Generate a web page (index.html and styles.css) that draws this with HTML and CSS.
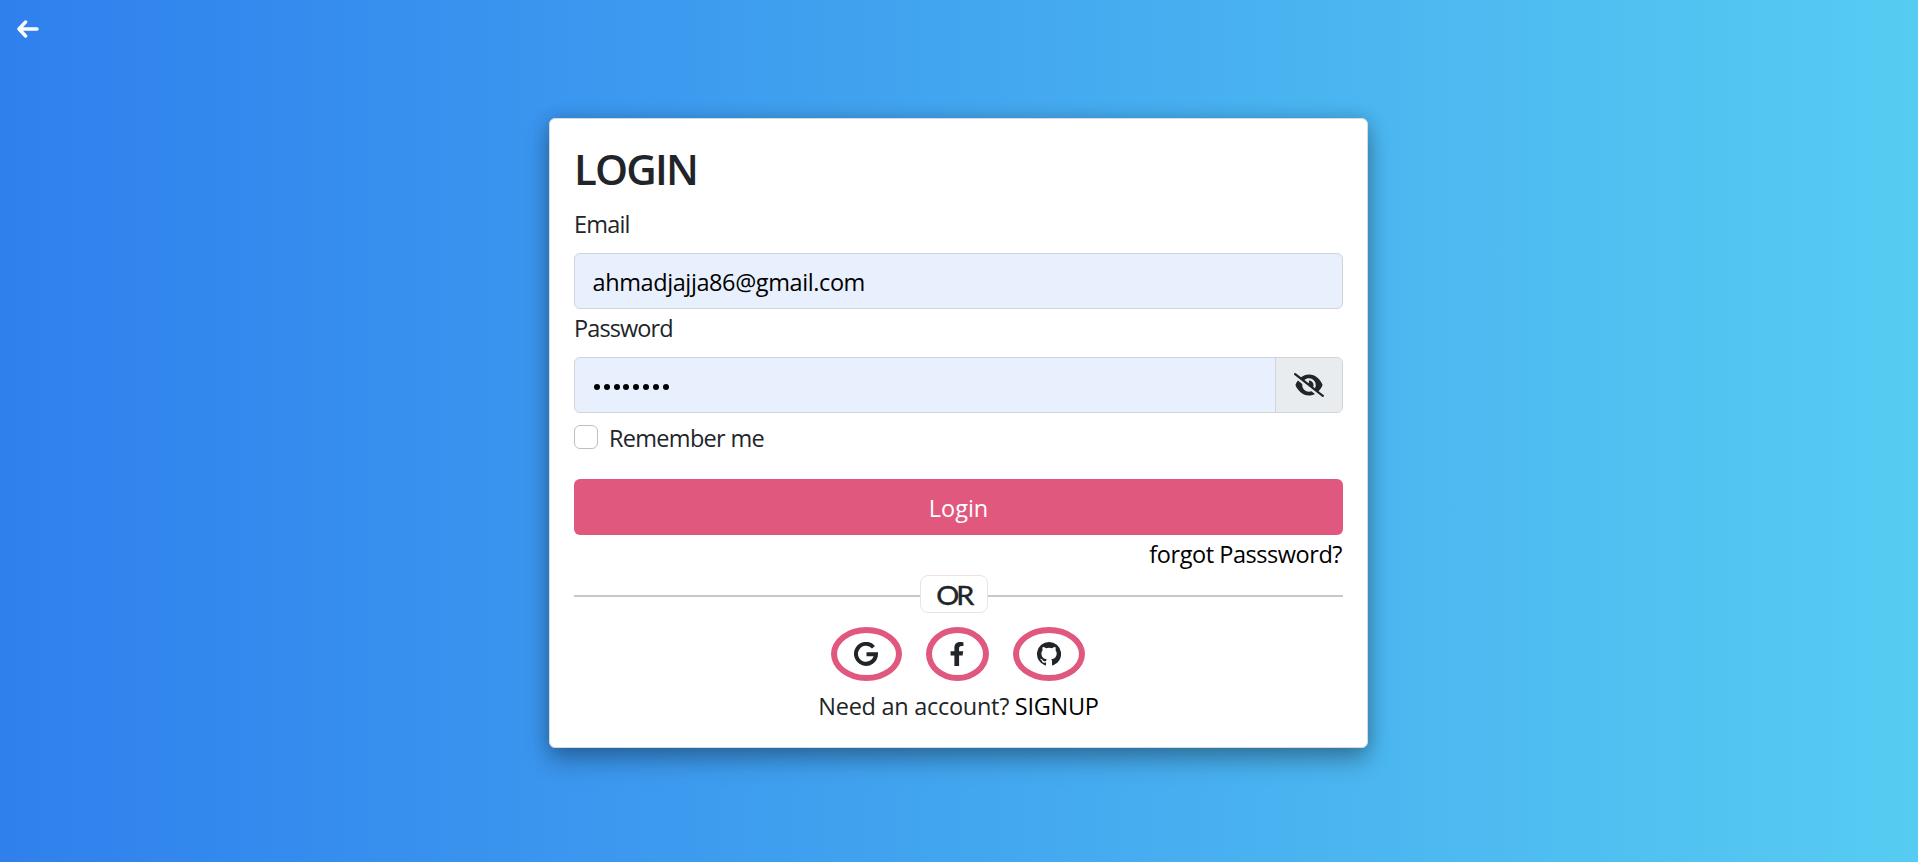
FILE: index.html
```html
<!DOCTYPE html>
<html lang="en">
<head>
<meta charset="utf-8">
<title>Login</title>
<link rel="stylesheet" href="styles.css">
</head>
<body>
<a class="back" href="#" aria-label="Back"><svg viewBox="0 0 22 20"><path d="M8.600 3 2 10l6.600 7M2.400 10H20" fill="none" stroke="#fff" stroke-width="3.400" stroke-linecap="round" stroke-linejoin="round"/></svg></a>
<main class="card">
  <h1 class="title"><span>LOGIN</span></h1>
  <div class="label"><span class="t-email">Email</span></div>
  <div class="field"><span class="value">ahmadjajja86@gmail.com</span></div>
  <div class="label"><span class="t-pass">Password</span></div>
  <div class="field group">
    <div class="dots"><i></i><i></i><i></i><i></i><i></i><i></i><i></i><i></i></div>
    <div class="addon"><svg viewBox="0 0 640 512"><path fill="#212529" d="M38.800 5.100C28.400-3.100 13.300-1.200 5.100 9.200S-1.200 34.700 9.200 42.900l592 464c10.400 8.200 25.500 6.300 33.700-4.100s6.300-25.500-4.100-33.700L525.600 386.700c39.600-40.600 66.400-86.100 79.900-118.400 3.300-7.900 3.300-16.700 0-24.600-14.900-35.700-46.200-87.700-93-131.100C465.500 68.800 400.800 32 320 32c-68.200 0-125 26.300-169.300 60.800L38.800 5.100zM223.100 149.500C248.600 126.200 282.700 112 320 112c79.500 0 144 64.500 144 144 0 24.900-6.300 48.300-17.400 68.700L408 294.500c8.400-19.300 10.600-41.400 4.800-63.300-11.100-41.500-47.800-69.400-88.600-71.100-5.800-.2-9.200 6.100-7.400 11.700 2.100 6.400 3.300 13.200 3.300 20.300 0 10.200-2.400 19.800-6.600 28.300l-90.400-70.900zM373 389.900c-16.400 6.500-34.300 10.100-53 10.100-79.500 0-144-64.500-144-144 0-6.900.5-13.600 1.400-20.200L83.100 161.500C60.300 191.200 44 220.800 34.500 243.700c-3.300 7.900-3.300 16.700 0 24.600 14.900 35.700 46.200 87.700 93 131.100C174.500 443.200 239.200 480 320 480c47.800 0 89.900-12.900 126.200-32.500L373 389.900z"/></svg></div>
  </div>
  <div class="remember"><span class="box"></span><span class="t-rem">Remember me</span></div>
  <button class="submit"><span>Login</span></button>
  <div class="forgot"><a href="#">forgot Passsword?</a></div>
  <div class="divider"><span class="line left"></span><span class="or"><span>OR</span></span><span class="line right"></span></div>
  <div class="social">
    <a class="ring google" href="#" aria-label="Google"><svg viewBox="0 0 24 24"><path fill="none" stroke="#212529" stroke-width="4" d="M19.500 5.200A10 10 0 1 0 22 12.200H12.500"/></svg></a>
    <a class="ring facebook" href="#" aria-label="Facebook"><svg viewBox="0 0 320 512"><path fill="#212529" d="m279 288 14.200-92.700h-88.900v-60.100c0-25.300 12.400-50.100 52.200-50.100H297V6.300S260.400 0 225.400 0C152.200 0 104.400 44.400 104.400 124.700v70.600H23V288h81.400v224h100.200V288z"/></svg></a>
    <a class="ring github" href="#" aria-label="GitHub"><svg viewBox="0 0 16 16"><path fill="#212529" d="M8 0a8 8 0 0 0-2.530 15.590c.4.070.55-.17.55-.38v-1.490c-2.010.37-2.530-.49-2.690-.94-.09-.23-.48-.94-.82-1.130-.28-.15-.68-.52-.01-.53.63-.01 1.080.58 1.230.82.720 1.210 1.870.87 2.330.66.070-.52.280-.87.510-1.070-1.780-.2-3.640-.89-3.640-3.950 0-.87.310-1.590.82-2.150-.08-.2-.36-1.020.08-2.120 0 0 .67-.21 2.200.82a7.420 7.420 0 0 1 4 0c1.530-1.040 2.200-.82 2.200-.82.440 1.100.16 1.920.08 2.120.51.560.82 1.270.82 2.150 0 3.070-1.870 3.750-3.650 3.950.29.250.54.730.54 1.480v2.200c0 .21.150.46.550.38A8 8 0 0 0 8 0z"/></svg></a>
  </div>
  <div class="signup"><span>Need an account? <a href="#">SIGNUP</a></span></div>
</main>
</body>
</html>
```
FILE: styles.css
```css
* { box-sizing: border-box; }
body {
  margin: 0;
  height: 862px;
  overflow: hidden;
  display: flex;
  justify-content: center;
  align-items: flex-start;
  padding-top: 118px;
  background: linear-gradient(to right, #2f80ed, #56ccf2);
  font: 23.5px/36px "Open Sans", "Noto Sans", sans-serif;
  color: #212529;
}
a { color: #000; text-decoration: none; }
.back { position: absolute; left: 16.5px; top: 19px; width: 22px; height: 20px; }
.back svg { display: block; width: 22px; height: 20px; }
.card {
  width: 819px;
  height: 630px;
  margin-right: 1px;
  padding: 24px;
  background: #fff;
  border: 1px solid #d5dade;
  border-radius: 6px;
  box-shadow: 0 12px 24px rgba(0, 0, 0, .3), 0 0 18px rgba(0, 0, 0, .15);
}
.title { margin: 0; height: 63px; font-size: 42px; line-height: 52px; font-weight: 600; letter-spacing: -1.8px; }
.label { height: 44px; }
.t-email { letter-spacing: -.8px; }
.t-pass { letter-spacing: -.9px; }
.field {
  height: 56px;
  margin: 3px 0 1px;
  border: 1px solid #ced4da;
  border-radius: 6px;
  background: #e8f0fe;
  color: #000;
  display: flex;
  align-items: center;
}
.value { padding: 2px 0 0 17.5px; letter-spacing: -.4px; }
.group { margin-bottom: 12px; overflow: hidden; }
.dots { flex: 1; display: flex; gap: 3.8px; padding: 4px 0 0 19px; }
.dots i { width: 6px; height: 6px; border-radius: 50%; background: #000; }
.addon { width: 67px; height: 100%; border-left: 1px solid #ced4da; background: #e9ecef; display: flex; align-items: center; justify-content: center; }
.addon svg { width: 30px; height: 24px; }
.remember { height: 54px; display: flex; gap: 11px; }
.box { width: 24px; height: 24px; border: 1px solid #bfbfbf; border-radius: 6px; }
.t-rem { line-height: 27px; letter-spacing: -.7px; }
.submit { display: flex; justify-content: center; align-items: center; width: 100%; height: 56px; padding: 2px 0 0; border: 0; border-radius: 6px; background: #e0587e; color: #fff; font: inherit; }
.forgot { height: 40px; padding: 1px 1px 0 0; text-align: right; letter-spacing: -.45px; }
.divider { height: 38px; display: flex; align-items: center; }
.line { height: 2px; background: #c7c8c9; margin-top: 4px; }
.left { width: 346px; }
.right { flex: 1; }
.or { width: 68px; height: 38px; border: 1px solid #f0e0e6; border-radius: 8px; display: flex; align-items: center; justify-content: center; font: 400 27.5px/36px Lato, sans-serif; letter-spacing: -3px; -webkit-text-stroke: .4px #212529; }
.or span { padding: 1px 0 0; transform: scaleX(1.05); }
.social { height: 68px; padding: 14px 2px 0 0; display: flex; justify-content: center; gap: 24px; }
.ring { height: 54px; border: 6px solid #e0587e; border-radius: 50%; display: flex; align-items: center; justify-content: center; }
.ring svg { width: 24px; height: 24px; }
.google { width: 71px; }
.facebook { width: 63px; }
.github { width: 72px; }
.signup { padding-top: 7px; text-align: center; letter-spacing: -.28px; }
```
